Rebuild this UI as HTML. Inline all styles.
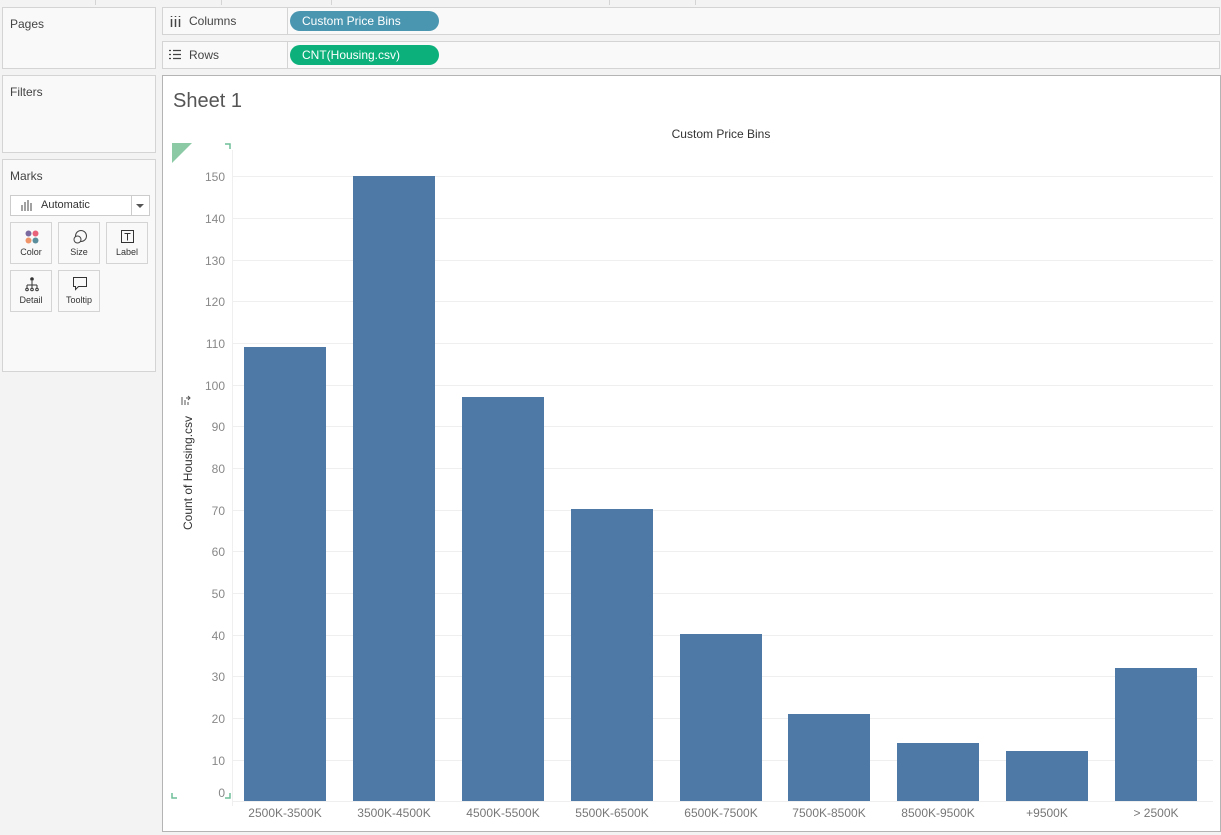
<!DOCTYPE html>
<html><head><meta charset="utf-8"><style>
*{margin:0;padding:0;box-sizing:border-box}
body{width:1221px;height:835px;background:#f3f3f3;font-family:"Liberation Sans",sans-serif;position:relative;overflow:hidden;color:#333}
.p{position:absolute;background:#f9f9f9;border:1px solid #d4d4d4}
.t{position:absolute;font-size:12px;color:#444}
.card{position:absolute;width:42px;height:42px;border:1px solid #d4d4d4;background:#f9f9f9;font-size:9px;text-align:center;color:#333}
.card span{position:absolute;left:0;right:0;bottom:6px}
.pill{position:absolute;height:20px;border-radius:10px;color:#fff;font-size:12px;padding-left:12px;line-height:20px}
</style></head><body>
<div style="position:absolute;left:95px;top:0;width:1px;height:5px;background:#d4d4d4"></div>
<div style="position:absolute;left:221px;top:0;width:1px;height:5px;background:#d4d4d4"></div>
<div style="position:absolute;left:331px;top:0;width:1px;height:5px;background:#d4d4d4"></div>
<div style="position:absolute;left:609px;top:0;width:1px;height:5px;background:#d4d4d4"></div>
<div style="position:absolute;left:695px;top:0;width:1px;height:5px;background:#d4d4d4"></div>

<div class="p" style="left:2px;top:7px;width:154px;height:62px"><div class="t" style="left:7px;top:9px">Pages</div></div>
<div class="p" style="left:2px;top:75px;width:154px;height:78px"><div class="t" style="left:7px;top:9px">Filters</div></div>
<div class="p" style="left:2px;top:159px;width:154px;height:213px"><div class="t" style="left:7px;top:9px">Marks</div>
 <div style="position:absolute;left:7px;top:35px;width:140px;height:21px;border:1px solid #ccc;background:#fff;font-size:11px;line-height:19px">
  <svg style="position:absolute;left:10px;top:4px" width="12" height="11"><path d="M1 5v6M4 2v9M7 0v11M10 3v8" stroke="#444" stroke-width="1"/></svg>
  <span style="position:absolute;left:30px">Automatic</span>
  <div style="position:absolute;right:0;top:0;width:18px;height:19px;border-left:1px solid #ccc"></div>
  <svg style="position:absolute;right:5px;top:8px" width="8" height="5"><path d="M0 0h8L4 4z" fill="#555"/></svg>
 </div>
 <div class="card" style="left:7px;top:62px"><svg style="position:absolute;left:14px;top:7px" width="14" height="14"><circle cx="3.5" cy="3.5" r="3" fill="#7b6a9f"/><circle cx="10.5" cy="3.5" r="3" fill="#e8627a"/><circle cx="3.5" cy="10.5" r="3" fill="#f0956a"/><circle cx="10.5" cy="10.5" r="3" fill="#5a8e9c"/></svg><span>Color</span></div>
 <div class="card" style="left:55px;top:62px"><svg style="position:absolute;left:13px;top:6px" width="16" height="16"><circle cx="9" cy="7" r="5.5" fill="none" stroke="#444"/><circle cx="5.5" cy="10.5" r="3.5" fill="#f9f9f9" stroke="#444"/></svg><span>Size</span></div>
 <div class="card" style="left:103px;top:62px"><svg style="position:absolute;left:14px;top:7px" width="14" height="14"><rect x="0.5" y="0.5" width="12" height="12" fill="none" stroke="#333"/><path d="M3.5 3.5h6M6.5 3.5v7" stroke="#333"/></svg><span>Label</span></div>
 <div class="card" style="left:7px;top:110px"><svg style="position:absolute;left:14px;top:6px" width="14" height="15"><circle cx="7" cy="2" r="1.8" fill="#333"/><path d="M7 4v4M2 8h10M2 8v3M7 8v3M12 8v3" stroke="#333"/><circle cx="2" cy="12.5" r="1.3" fill="none" stroke="#333"/><circle cx="7" cy="12.5" r="1.3" fill="none" stroke="#333"/><circle cx="12" cy="12.5" r="1.3" fill="none" stroke="#333"/></svg><span>Detail</span></div>
 <div class="card" style="left:55px;top:110px"><svg style="position:absolute;left:14px;top:6px" width="15" height="15"><path d="M0.5 0.5h13v9h-8l-3 3v-3h-2z" fill="none" stroke="#333"/></svg><span>Tooltip</span></div>
</div>

<div class="p" style="left:162px;top:7px;width:1058px;height:28px">
 <svg style="position:absolute;left:7px;top:7px" width="12" height="12"><path d="M1.5 4v8M5.5 4v8M9.5 4v8" stroke="#444" stroke-width="1.5"/><path d="M1.5 1v1M5.5 1v1M9.5 1v1" stroke="#444" stroke-width="1.5"/></svg>
 <div class="t" style="left:26px;top:6px">Columns</div>
 <div style="position:absolute;left:124px;top:0;width:1px;height:26px;background:#d4d4d4"></div>
 <div class="pill" style="left:127px;top:3px;width:149px;background:#4a96b0">Custom Price Bins</div>
</div>
<div class="p" style="left:162px;top:41px;width:1058px;height:28px">
 <svg style="position:absolute;left:6px;top:7px" width="13" height="12"><path d="M0 1.5h2M0 5.5h2M0 9.5h2M4 1.5h8M4 5.5h8M4 9.5h8" stroke="#444" stroke-width="1.3"/></svg>
 <div class="t" style="left:26px;top:6px">Rows</div>
 <div style="position:absolute;left:124px;top:0;width:1px;height:26px;background:#d4d4d4"></div>
 <div class="pill" style="left:127px;top:3px;width:149px;background:#0bb07a">CNT(Housing.csv)</div>
</div>

<div style="position:absolute;left:162px;top:75px;width:1059px;height:757px;background:#fff;border:1px solid #b4b4b4">
 <div style="position:absolute;left:10px;top:14px;font-size:20px;color:#555">Sheet 1</div>
</div>

<svg style="position:absolute;left:0;top:0" width="1221" height="835" font-family="Liberation Sans, sans-serif">
 <text x="721" y="138" font-size="12" fill="#333" text-anchor="middle">Custom Price Bins</text>
 <path d="M172 143h20l-20 20z" fill="#8ccaa6"/>
 <path d="M225 144h5v5M172 793v5h5M230 793v5h-5" fill="none" stroke="#6fbf98" stroke-width="1.5"/>
 <g stroke="#efefef" stroke-width="1">
  <line x1="232" x2="1213" y1="176.5" y2="176.5"/><line x1="232" x2="1213" y1="218.5" y2="218.5"/>
  <line x1="232" x2="1213" y1="260.5" y2="260.5"/><line x1="232" x2="1213" y1="301.5" y2="301.5"/>
  <line x1="232" x2="1213" y1="343.5" y2="343.5"/><line x1="232" x2="1213" y1="385.5" y2="385.5"/>
  <line x1="232" x2="1213" y1="426.5" y2="426.5"/><line x1="232" x2="1213" y1="468.5" y2="468.5"/>
  <line x1="232" x2="1213" y1="510.5" y2="510.5"/><line x1="232" x2="1213" y1="551.5" y2="551.5"/>
  <line x1="232" x2="1213" y1="593.5" y2="593.5"/><line x1="232" x2="1213" y1="635.5" y2="635.5"/>
  <line x1="232" x2="1213" y1="676.5" y2="676.5"/><line x1="232" x2="1213" y1="718.5" y2="718.5"/>
  <line x1="232" x2="1213" y1="760.5" y2="760.5"/><line x1="232" x2="1213" y1="801.5" y2="801.5"/>
  <line x1="232.5" x2="232.5" y1="150" y2="806"/>
 </g>
 <g font-size="12" fill="#888" text-anchor="end">
  <text x="225" y="181">150</text><text x="225" y="223">140</text><text x="225" y="265">130</text>
  <text x="225" y="306">120</text><text x="225" y="348">110</text><text x="225" y="390">100</text>
  <text x="225" y="431">90</text><text x="225" y="473">80</text><text x="225" y="515">70</text>
  <text x="225" y="556">60</text><text x="225" y="598">50</text><text x="225" y="640">40</text>
  <text x="225" y="681">30</text><text x="225" y="723">20</text><text x="225" y="765">10</text>
  <text x="225" y="797">0</text>
 </g>
 <text transform="translate(192,530) rotate(-90)" font-size="12" fill="#333">Count of Housing.csv</text>
 <path d="M182 397v8M185 400v5M188 402v3M186 398h4M188 396l2 2-2 2" stroke="#555" fill="none"/>
 <g fill="#4e79a7">
  <rect x="244" y="347" width="82" height="454"/>
  <rect x="353" y="176" width="82" height="625"/>
  <rect x="462" y="397" width="82" height="404"/>
  <rect x="571" y="509" width="82" height="292"/>
  <rect x="680" y="634" width="82" height="167"/>
  <rect x="788" y="714" width="82" height="87"/>
  <rect x="897" y="743" width="82" height="58"/>
  <rect x="1006" y="751" width="82" height="50"/>
  <rect x="1115" y="668" width="82" height="133"/>
 </g>
 <g font-size="12" fill="#777" text-anchor="middle">
  <text x="285" y="817">2500K-3500K</text><text x="394" y="817">3500K-4500K</text>
  <text x="503" y="817">4500K-5500K</text><text x="612" y="817">5500K-6500K</text>
  <text x="721" y="817">6500K-7500K</text><text x="829" y="817">7500K-8500K</text>
  <text x="938" y="817">8500K-9500K</text><text x="1047" y="817">+9500K</text>
  <text x="1156" y="817">&gt; 2500K</text>
 </g>
</svg>
</body></html>
